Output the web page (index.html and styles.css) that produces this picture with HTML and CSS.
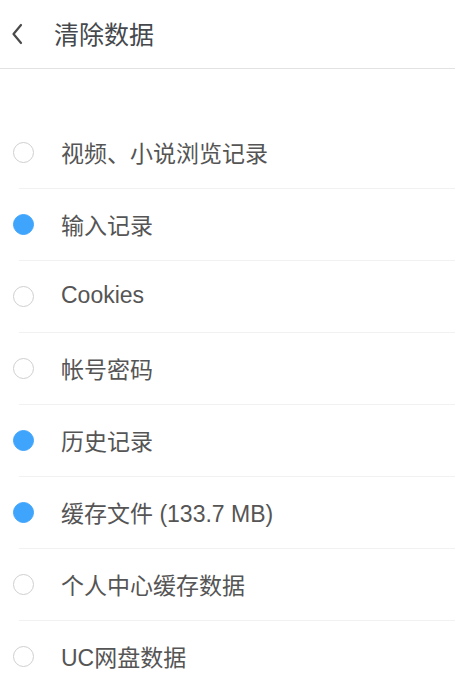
FILE: index.html
```html
<!DOCTYPE html>
<html lang="zh-CN">
<head>
<meta charset="utf-8">
<title>清除数据</title>
<link rel="stylesheet" href="styles.css">
</head>
<body>
<header class="topbar">
  <span class="back">
    <svg width="12" height="22" viewBox="0 0 12 22"><path d="M10 2 L2.5 11 L10 20" fill="none" stroke="#4a4a4a" stroke-width="2.2" stroke-linecap="round" stroke-linejoin="round"/></svg>
  </span>
  <h1 class="title">清除数据</h1>
</header>
<ul class="list">
  <li class="row"><span class="radio"></span><span class="label">视频、小说浏览记录</span></li>
  <li class="row"><span class="radio on"></span><span class="label">输入记录</span></li>
  <li class="row"><span class="radio"></span><span class="label">Cookies</span></li>
  <li class="row"><span class="radio"></span><span class="label">帐号密码</span></li>
  <li class="row"><span class="radio on"></span><span class="label">历史记录</span></li>
  <li class="row"><span class="radio on"></span><span class="label">缓存文件 (133.7 MB)</span></li>
  <li class="row"><span class="radio"></span><span class="label">个人中心缓存数据</span></li>
  <li class="row"><span class="radio"></span><span class="label">UC网盘数据</span></li>
</ul>
</body>
</html>
```
FILE: styles.css
```css
html, body {
  margin: 0;
  padding: 0;
  background: #ffffff;
  font-family: "Liberation Sans", "Noto Sans CJK SC", sans-serif;
  color: #555555;
  overflow: hidden;
}
.topbar {
  height: 68px;
  border-bottom: 1px solid #e2e2e2;
  display: flex;
  align-items: center;
}
.back {
  width: 12px;
  height: 22px;
  margin-left: 11px;
  display: flex;
}
.title {
  margin: 0 0 0 31px;
  font-size: 25px;
  font-weight: normal;
  color: #45494d;
  padding-bottom: 2px;
}
.list {
  list-style: none;
  margin: 48px 0 0 0;
  padding: 0;
}
.row {
  height: 71px;
  border-bottom: 1px solid #f1f1f1;
  margin-left: 19px;
  display: flex;
  align-items: center;
}
.radio {
  box-sizing: border-box;
  width: 21px;
  height: 21px;
  border-radius: 50%;
  border: 1.5px solid #cfcfcf;
  margin-left: -6px;
}
.radio.on {
  background: #3fa5fc;
  border-color: #3fa5fc;
}
.label {
  margin-left: 27px;
  font-size: 23px;
  color: #555555;
  padding-bottom: 2px;
}
```
